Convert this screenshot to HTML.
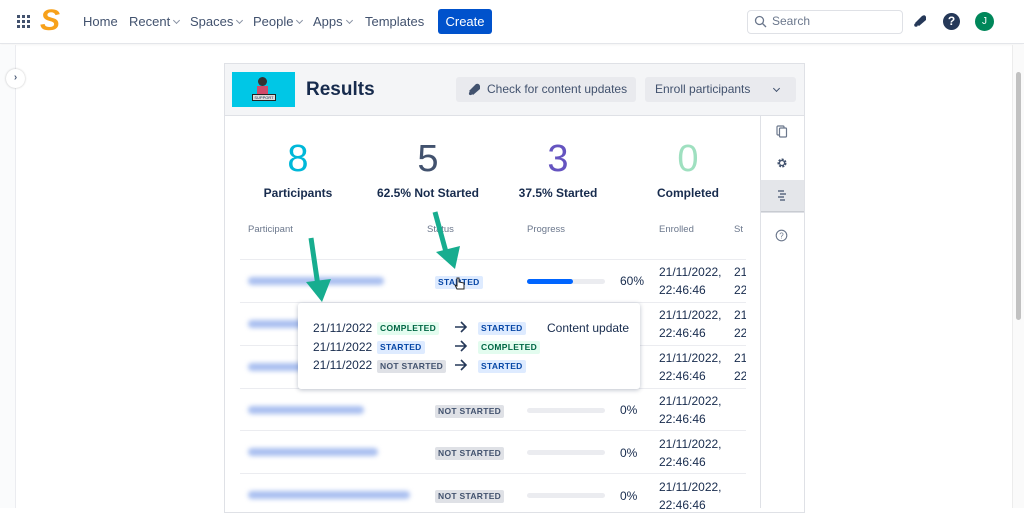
<!DOCTYPE html>
<html><head><meta charset="utf-8"><style>
*{margin:0;padding:0;box-sizing:border-box}
body{width:1024px;height:508px;overflow:hidden;background:#fff;font-family:"Liberation Sans",sans-serif;color:#172b4d;position:relative}
.a{position:absolute}
.nav{font-size:13px;color:#42526e;top:14px}
.chev{display:inline-block;width:5px;height:5px;border-right:1.3px solid #8993a4;border-bottom:1.3px solid #8993a4;transform:rotate(45deg);margin-left:4px;position:relative;top:-3px}
.lz{font-size:8.5px;font-weight:bold;letter-spacing:.3px;padding:2px 3px;border-radius:2px;line-height:9px}
.st{background:#deebff;color:#0747a6}
.cp{background:#e3fcef;color:#006644}
.ns{background:#dfe1e6;color:#42526e}
.email{height:8px;background:#a9bff0;border-radius:4px;filter:blur(2.5px)}
.bar{width:78px;height:5px;border-radius:3px;background:#ebecf0}
.dt{font-size:12px;line-height:18px;color:#172b4d}
.hr{height:1px;background:#ebecf0;left:240px;width:506px}
.num{font-size:38px;text-align:center;width:140px}
.lab{font-size:12px;font-weight:bold;text-align:center;width:160px}
.th{font-size:9.5px;color:#6b778c;top:224px}
.arr{font-size:16px;font-weight:bold;color:#253858}
</style></head><body>
<div class="a" style="left:0;top:0;width:1024px;height:44px;background:#fff;border-bottom:1px solid #e4e6ea;box-shadow:0 1px 2px rgba(0,0,0,.05)"></div>
<svg class="a" style="left:17px;top:15px" width="13" height="13"><g fill="#42526e"><rect x="0" y="0" width="3" height="3"/><rect x="5" y="0" width="3" height="3"/><rect x="10" y="0" width="3" height="3"/><rect x="0" y="5" width="3" height="3"/><rect x="5" y="5" width="3" height="3"/><rect x="10" y="5" width="3" height="3"/><rect x="0" y="10" width="3" height="3"/><rect x="5" y="10" width="3" height="3"/><rect x="10" y="10" width="3" height="3"/></g></svg>
<div class="a" style="left:40px;top:8px;width:21px;height:26px;color:#f7a11a;font-size:30px;font-weight:bold;line-height:26px;font-style:italic">S</div>
<div class="a nav" style="left:83px">Home</div>
<div class="a nav" style="left:129px">Recent<span class="chev"></span></div>
<div class="a nav" style="left:190px">Spaces<span class="chev"></span></div>
<div class="a nav" style="left:253px">People<span class="chev"></span></div>
<div class="a nav" style="left:313px">Apps<span class="chev"></span></div>
<div class="a nav" style="left:365px">Templates</div>
<div class="a" style="left:438px;top:9px;width:54px;height:25px;background:#0052cc;border-radius:3px;color:#fff;font-size:13px;text-align:center;line-height:25px">Create</div>
<div class="a" style="left:747px;top:10px;width:156px;height:24px;border:1.5px solid #dfe1e6;border-radius:4px;font-size:12px;color:#6b778c;line-height:21px;padding-left:24px">Search</div>
<svg class="a" style="left:754px;top:15px" width="13" height="13"><circle cx="5.5" cy="5.5" r="4" fill="none" stroke="#6b778c" stroke-width="1.3"/><line x1="8.5" y1="8.5" x2="12" y2="12" stroke="#6b778c" stroke-width="1.3"/></svg>
<svg class="a" style="left:913px;top:13px" width="15" height="15"><path d="M2 10 L9 3 Q12 1 13 4 L13 7 L6 13 Z" fill="#253858"/><circle cx="3" cy="12" r="1.8" fill="#253858"/></svg>
<div class="a" style="left:943px;top:13px;width:17px;height:17px;border-radius:50%;background:#253858;color:#fff;font-size:12px;font-weight:bold;text-align:center;line-height:17px">?</div>
<div class="a" style="left:975px;top:12px;width:19px;height:19px;border-radius:50%;background:#00875a;color:#fff;font-size:10px;text-align:center;line-height:19px">J</div>
<div class="a" style="left:0;top:45px;width:16px;height:463px;background:#fafbfc;border-right:1px solid #ebecf0"></div>
<div class="a" style="left:6px;top:69px;width:19px;height:19px;border-radius:50%;background:#fff;box-shadow:0 0 2px rgba(0,0,0,.25);color:#505f79;font-size:10px;text-align:center;line-height:18px;font-weight:bold">›</div>
<div class="a" style="left:1012px;top:45px;width:12px;height:463px;background:#fafafa;border-left:1px solid #ececec"></div>
<div class="a" style="left:1016px;top:72px;width:5px;height:248px;background:#c1c1c1;border-radius:3px"></div>
<div class="a" style="left:224px;top:63px;width:581px;height:450px;border:1px solid #dfe1e6;background:#fff"></div>
<div class="a" style="left:225px;top:64px;width:579px;height:52px;background:#f4f5f7;border-bottom:1px solid #dfe1e6"></div>
<div class="a" style="left:232px;top:72px;width:63px;height:35px;background:#00c7e6"></div>
<div class="a" style="left:258px;top:77px;width:9px;height:9px;border-radius:50%;background:#333"></div>
<div class="a" style="left:257px;top:86px;width:11px;height:9px;background:#d04a6a"></div>
<div class="a" style="left:252px;top:94px;width:24px;height:7px;background:#ddd;border:1px solid #222;font-size:4px;text-align:center;line-height:5px">SUPPORT</div>
<div class="a" style="left:306px;top:79px;font-size:19px;color:#172b4d;font-weight:bold;-webkit-text-stroke:0">Results</div>
<div class="a" style="left:456px;top:77px;width:180px;height:25px;background:#e9eaee;border-radius:3px;font-size:12px;color:#42526e;line-height:25px;padding-left:31px">Check for content updates</div>
<svg class="a" style="left:468px;top:83px" width="14" height="13"><path d="M1 8 L8 1 Q11 0 12 3 L12 6 L5 12 Z" fill="#42526e"/><circle cx="2.5" cy="10.5" r="1.6" fill="#42526e"/></svg>
<div class="a" style="left:645px;top:77px;width:151px;height:25px;background:#e9eaee;border-radius:3px;font-size:12px;color:#42526e;line-height:25px;padding-left:10px">Enroll participants</div>
<div style="position:absolute;left:774px;top:86px;width:5px;height:5px;border-right:1.5px solid #42526e;border-bottom:1.5px solid #42526e;transform:rotate(45deg)"></div>
<div class="a" style="left:760px;top:116px;width:1px;height:392px;background:#dfe1e6"></div>
<div class="a" style="left:761px;top:180px;width:43px;height:32px;background:#e4e6ea;border-bottom:1px solid #c8cbd1"></div>
<div class="a" style="left:761px;top:212px;width:43px;height:1px;background:#dfe1e6"></div>
<svg class="a" style="left:776px;top:125px" width="12" height="13"><rect x="1" y="1" width="7" height="9" rx="1" fill="none" stroke="#6b778c" stroke-width="1.2"/><rect x="3.5" y="3" width="7" height="9" rx="1" fill="#fff" stroke="#6b778c" stroke-width="1.2"/></svg>
<svg class="a" style="left:776px;top:157px" width="12" height="12"><circle cx="6" cy="6" r="3.5" fill="none" stroke="#42526e" stroke-width="2" stroke-dasharray="2 1.2"/><circle cx="6" cy="6" r="2.5" fill="none" stroke="#42526e" stroke-width="1.2"/></svg>
<svg class="a" style="left:776px;top:189px" width="12" height="13"><path d="M2 2h6M4 5h6M2 8h6M4 11h5" stroke="#42526e" stroke-width="1.3" fill="none"/></svg>
<svg class="a" style="left:775px;top:229px" width="13" height="13"><circle cx="6.5" cy="6.5" r="5.3" fill="none" stroke="#6b778c" stroke-width="1.1"/><text x="6.5" y="9.5" font-size="8" text-anchor="middle" fill="#6b778c" font-family="Liberation Sans">?</text></svg>
<div class="a num" style="left:228px;top:138px;color:#00b8d9">8</div>
<div class="a num" style="left:358px;top:138px;color:#42526e">5</div>
<div class="a num" style="left:488px;top:138px;color:#6554c0">3</div>
<div class="a num" style="left:618px;top:138px;color:#9fe0c0">0</div>
<div class="a lab" style="left:218px;top:186px">Participants</div>
<div class="a lab" style="left:348px;top:186px">62.5% Not Started</div>
<div class="a lab" style="left:478px;top:186px">37.5% Started</div>
<div class="a lab" style="left:608px;top:186px">Completed</div>
<div class="a th" style="left:248px">Participant</div>
<div class="a th" style="left:427px">Status</div>
<div class="a th" style="left:527px">Progress</div>
<div class="a th" style="left:659px">Enrolled</div>
<div class="a th" style="left:734px">St</div>
<div class="a hr" style="top:259px"></div>
<div class="a hr" style="top:302px"></div>
<div class="a hr" style="top:345px"></div>
<div class="a hr" style="top:388px"></div>
<div class="a hr" style="top:430px"></div>
<div class="a hr" style="top:473px"></div>
<div class="a email" style="left:248px;top:277px;width:136px"></div>
<div class="a lz st" style="left:435px;top:276px">STARTED</div>
<div class="a bar" style="left:527px;top:279px"></div>
<div class="a" style="left:527px;top:279px;width:46px;height:5px;border-radius:3px;background:#0065ff"></div>
<div class="a dt" style="left:620px;top:272px">60%</div>
<div class="a dt" style="left:659px;top:263px">21/11/2022,<br>22:46:46</div>
<div class="a dt" style="left:734px;top:263px;width:12px;overflow:hidden">21<br>22</div>
<div class="a email" style="left:248px;top:320px;width:60px"></div>
<div class="a email" style="left:248px;top:363px;width:60px"></div>
<div class="a dt" style="left:659px;top:306px">21/11/2022,<br>22:46:46</div>
<div class="a dt" style="left:734px;top:306px;width:12px;overflow:hidden">21<br>22</div>
<div class="a dt" style="left:659px;top:349px">21/11/2022,<br>22:46:46</div>
<div class="a dt" style="left:734px;top:349px;width:12px;overflow:hidden">21<br>22</div>
<div class="a email" style="left:248px;top:406px;width:116px"></div>
<div class="a lz ns" style="left:435px;top:405px">NOT STARTED</div>
<div class="a bar" style="left:527px;top:408px"></div>
<div class="a dt" style="left:620px;top:401px">0%</div>
<div class="a dt" style="left:659px;top:392px">21/11/2022,<br>22:46:46</div>
<div class="a email" style="left:248px;top:448px;width:130px"></div>
<div class="a lz ns" style="left:435px;top:447px">NOT STARTED</div>
<div class="a bar" style="left:527px;top:450px"></div>
<div class="a dt" style="left:620px;top:444px">0%</div>
<div class="a dt" style="left:659px;top:435px">21/11/2022,<br>22:46:46</div>
<div class="a email" style="left:248px;top:491px;width:162px"></div>
<div class="a lz ns" style="left:435px;top:490px">NOT STARTED</div>
<div class="a bar" style="left:527px;top:493px"></div>
<div class="a dt" style="left:620px;top:487px">0%</div>
<div class="a dt" style="left:659px;top:478px">21/11/2022,<br>22:46:46</div>
<div class="a" style="left:298px;top:303px;width:342px;height:86px;background:#fff;border-radius:3px;box-shadow:0 1px 5px rgba(9,30,66,.28)"></div>
<div class="a dt" style="left:313px;top:319px">21/11/2022</div>
<div class="a dt" style="left:313px;top:338px">21/11/2022</div>
<div class="a dt" style="left:313px;top:356px">21/11/2022</div>
<div class="a lz cp" style="left:377px;top:322px">COMPLETED</div>
<div class="a lz st" style="left:377px;top:341px">STARTED</div>
<div class="a lz ns" style="left:377px;top:360px">NOT STARTED</div>
<svg class="a" style="left:454px;top:321px" width="14" height="52"><g stroke="#253858" stroke-width="1.6" fill="none"><path d="M1 6h11M7 1l5 5-5 5"/><path d="M1 25h11M7 20l5 5-5 5"/><path d="M1 44h11M7 39l5 5-5 5"/></g></svg>
<div class="a lz st" style="left:478px;top:322px">STARTED</div>
<div class="a lz cp" style="left:478px;top:341px">COMPLETED</div>
<div class="a lz st" style="left:478px;top:360px">STARTED</div>
<div class="a dt" style="left:547px;top:319px">Content update</div>
<svg class="a" style="left:0;top:0" width="1024" height="508">
<line x1="311" y1="238" x2="318" y2="286" stroke="#17ad8f" stroke-width="5"/>
<path d="M306 282 L331 279 L322 302 Z" fill="#17ad8f"/>
<line x1="435" y1="212" x2="446" y2="252" stroke="#17ad8f" stroke-width="5"/>
<path d="M436 252 L460 246 L455 269 Z" fill="#17ad8f"/>
</svg>
<svg class="a" style="left:454px;top:277px" width="12" height="14"><path d="M3 1 L3 9 L1 8 L3 12 L10 12 L10 6 L5 5 L5 1 Z" fill="#fff" stroke="#222" stroke-width="1"/></svg>
</body></html>
